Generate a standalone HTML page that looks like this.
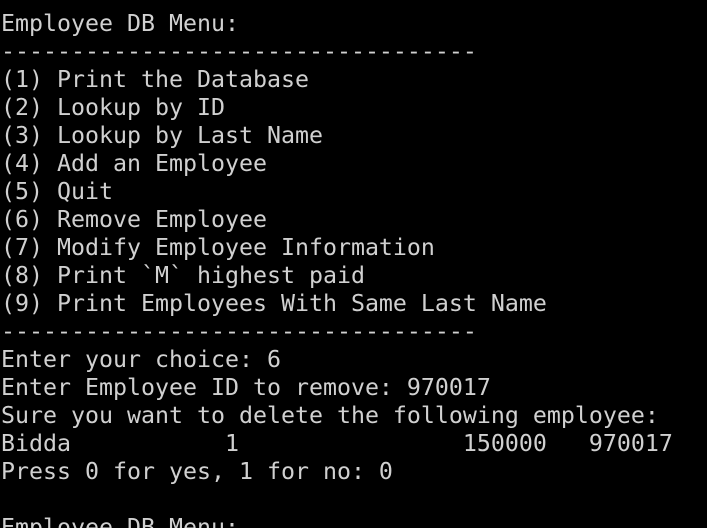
<!DOCTYPE html>
<html><head><meta charset="utf-8"><style>
html,body{margin:0;padding:0;background:#000;width:707px;height:528px;overflow:hidden}
pre{margin:0;padding:10px 0 0 1px;font-family:"DejaVu Sans Mono","Liberation Mono",monospace;font-size:23.25px;line-height:28px;color:#d0d0d0;white-space:pre}
</style></head><body><pre>Employee DB Menu:
----------------------------------
(1) Print the Database
(2) Lookup by ID
(3) Lookup by Last Name
(4) Add an Employee
(5) Quit
(6) Remove Employee
(7) Modify Employee Information
(8) Print `M` highest paid
(9) Print Employees With Same Last Name
----------------------------------
Enter your choice: 6
Enter Employee ID to remove: 970017
Sure you want to delete the following employee:
Bidda           1                150000   970017
Press 0 for yes, 1 for no: 0

Employee DB Menu:</pre></body></html>
